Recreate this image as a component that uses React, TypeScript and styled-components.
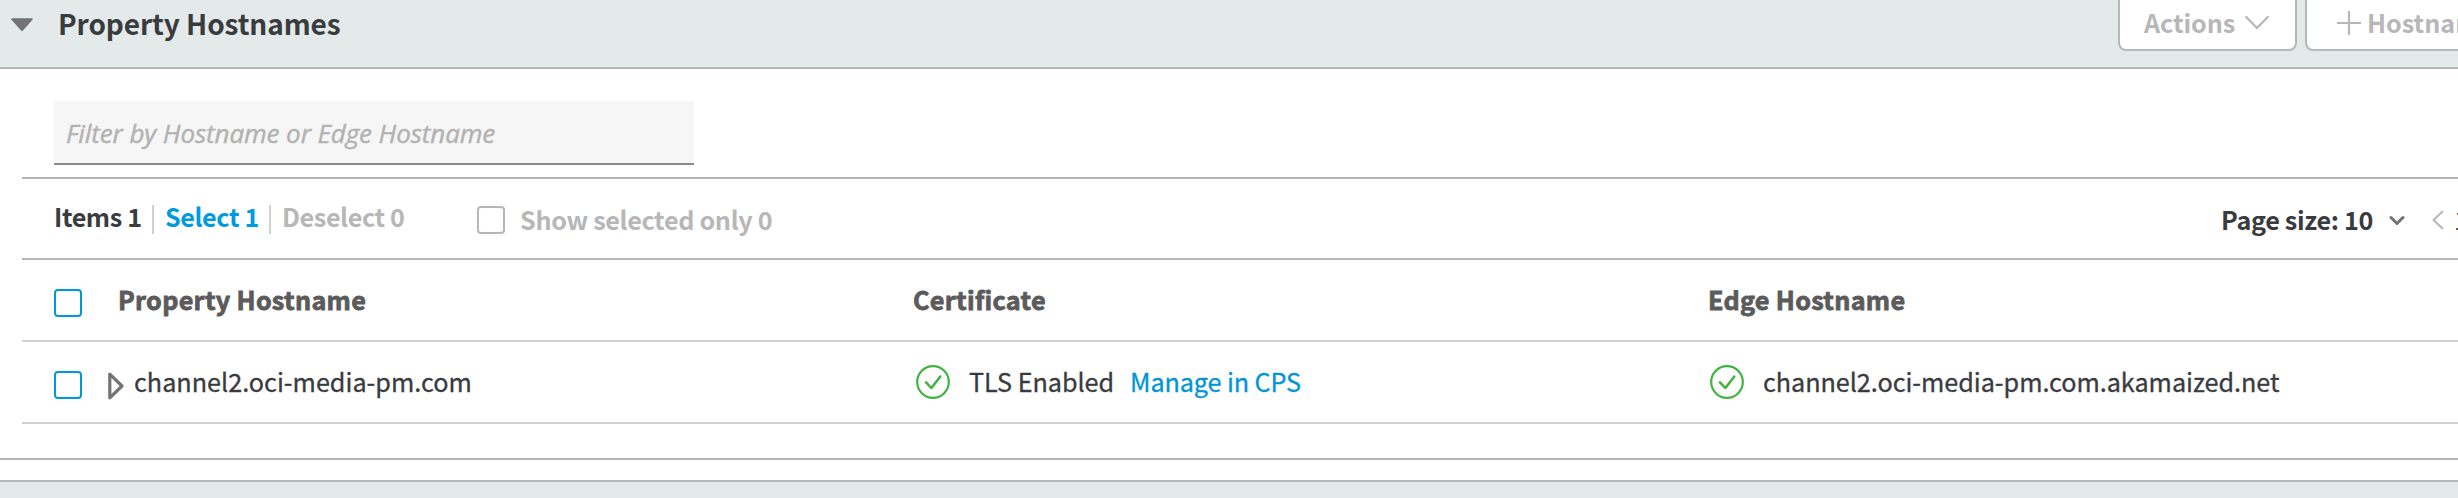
import React from "react";
import styled, { createGlobalStyle } from "styled-components";

const GlobalStyle = createGlobalStyle`
  * { box-sizing: border-box; }
  html, body { margin: 0; background: #fff; overflow: hidden; }
  body {
    font-family: "Noto Sans CJK JP", "Noto Sans", sans-serif;
    font-size: 25.2px;
    color: #3a3b3f;
  }
  svg { display: block; flex: none; }
`;

const Page = styled.div`
  height: 498px;
  display: flex;
  flex-direction: column;
  overflow: hidden;
  white-space: nowrap;
`;

const Header = styled.header`
  flex: none;
  height: 69px;
  display: flex;
  align-items: flex-start;
  background: #e4eae9;
  border-bottom: 2px solid #b3b7b7;
`;

const Collapse = styled.div`
  width: 58px;
  padding: 18px 0 0 10px;
`;

const Title = styled.h2`
  flex: 1;
  margin: 0;
  font-size: 28px;
  line-height: 46px;
  font-weight: 700;
  letter-spacing: -0.08px;
`;

const HeaderActions = styled.div`
  display: flex;
  gap: 8px;
  width: 340px;
`;

const Button = styled.button<{ $width: number; $pad: number }>`
  flex: none;
  width: ${(p) => p.$width}px;
  height: 63px;
  margin: -12px 0 0;
  padding: 9px 0 0 ${(p) => p.$pad}px;
  display: flex;
  align-items: flex-start;
  background: #fff;
  border: 2px solid #b5b8b8;
  border-radius: 8px;
  color: #b7b7b7;
  font: inherit;
  font-weight: 700;
  line-height: 46px;
  text-align: left;
`;

const ActionsLabel = styled.span`
  width: 101px;
  letter-spacing: -0.1px;
`;

const HostLabel = styled.span`
  margin-left: 6px;
`;

const IconSlot = styled.span<{ $top: number }>`
  padding-top: ${(p) => p.$top}px;
`;

const Panel = styled.section`
  flex: none;
  height: 391px;
  padding-left: 22px;
  border-bottom: 2px solid #b7b7b7;
`;

const FilterArea = styled.div`
  height: 110px;
  padding: 32px 0 0 32px;
  border-bottom: 2px solid #b5b5b5;
`;

const FilterInput = styled.input`
  display: block;
  width: 640px;
  height: 64px;
  padding: 2px 12px 0;
  border: 0;
  border-bottom: 2px solid #8a8a8a;
  border-radius: 0;
  background: #f6f6f6;
  font: italic 400 26px "Open Sans", sans-serif;
  letter-spacing: -0.1px;
  outline: none;
  &::placeholder {
    color: #b2b2b2;
    opacity: 1;
    -webkit-text-stroke: 0.4px #b2b2b2;
  }
`;

const Toolbar = styled.div`
  height: 81px;
  display: flex;
  align-items: flex-start;
  padding: 15px 0 0 32px;
  border-bottom: 2px solid #b5b5b5;
  font-weight: 700;
  line-height: 44px;
`;

const Count = styled.span<{ $width: number; $color: string }>`
  width: ${(p) => p.$width}px;
  color: ${(p) => p.$color};
  letter-spacing: -0.4px;
`;

const Divider = styled.i`
  width: 2px;
  height: 29px;
  margin: 11px 11px 0 0;
  background: #d0d0d0;
`;

const Box = styled.span<{ $muted?: boolean }>`
  flex: none;
  width: 28px;
  height: 28px;
  border: 2px solid ${(p) => (p.$muted ? "#b7b7b7" : "#0099d8")};
  border-radius: 4px;
  background: #fff;
`;

const ShowSelected = styled.label`
  flex: 1;
  display: flex;
  gap: 15px;
  padding-top: 3px;
  color: #b7b7b7;
  letter-spacing: -0.34px;
  ${Box} { margin-top: 9px; }
`;

const PageSize = styled.span`
  width: 168px;
  padding-top: 3px;
  letter-spacing: -0.35px;
`;

const Pager = styled.div`
  width: 69px;
  display: flex;
  overflow: hidden;
`;

const PageNumber = styled.span`
  padding: 3px 0 0 9px;
  font-weight: 400;
`;

const Row = styled.div<{ $head?: boolean }>`
  height: 82px;
  display: grid;
  grid-template-columns: 891px 795px 1fr;
  align-items: start;
  border-bottom: 2px solid #d0d0d0;
  line-height: 60px;
  -webkit-text-stroke: 0.3px currentColor;
  ${(p) => p.$head && `
    font-weight: 700;
    color: #5b5b5b;
    letter-spacing: 0.3px;
    -webkit-text-stroke: 0.8px #5b5b5b;
  `}
`;

const Cell = styled.div<{ $top?: number; $left?: number }>`
  display: flex;
  padding: ${(p) => p.$top ?? 0}px 0 0 ${(p) => p.$left ?? 0}px;
`;

const RowCheck = styled.div<{ $width: number }>`
  width: ${(p) => p.$width}px;
  padding: 29px 0 0 32px;
`;

const RowText = styled.span`
  margin-left: 19px;
  letter-spacing: -0.04px;
`;

const Link = styled.a`
  margin-left: 16px;
  color: #0096d6;
  letter-spacing: -0.1px;
`;

const NextSection = styled.div`
  flex: 1;
  margin-top: 20px;
  border-top: 2px solid #b3b7b7;
  background: #e4eae9;
`;

const CheckCircle = () => (
  <IconSlot $top={14}>
    <svg width="34" height="34" viewBox="0 0 34 34" fill="none" stroke="#3fb33f">
      <circle cx="17" cy="17" r="15.8" strokeWidth="2.2" />
      <path d="M10 17.3L15.4 23L24.3 11.5" strokeWidth="2.5" strokeLinecap="round" strokeLinejoin="round" />
    </svg>
  </IconSlot>
);

export default function App() {
  return (
    <Page>
      <GlobalStyle />
      <Header>
        <Collapse>
          <svg width="24" height="14" viewBox="0 0 24 14">
            <path d="M2.2 1.2H21.8L12 12Z" fill="#737373" stroke="#737373" strokeWidth="2" strokeLinejoin="round" />
          </svg>
        </Collapse>
        <Title>Property Hostnames</Title>
        <HeaderActions>
          <Button $width={179} $pad={24}>
            <ActionsLabel>Actions</ActionsLabel>
            <IconSlot $top={16}>
              <svg width="24" height="15" viewBox="0 0 24 15" fill="none" stroke="#b7b7b7" strokeWidth="2.3" strokeLinecap="round" strokeLinejoin="round">
                <path d="M1.2 2L12 13L22.8 2" />
              </svg>
            </IconSlot>
          </Button>
          <Button $width={220} $pad={30}>
            <IconSlot $top={12}>
              <svg width="24" height="24" viewBox="0 0 24 24" stroke="#b7b7b7" strokeWidth="2.2">
                <path d="M12 0V24M0 12H24" />
              </svg>
            </IconSlot>
            <HostLabel>Hostnames</HostLabel>
          </Button>
        </HeaderActions>
      </Header>
      <Panel>
        <FilterArea>
          <FilterInput placeholder="Filter by Hostname or Edge Hostname" />
        </FilterArea>
        <Toolbar>
          <Count $width={98} $color="#3a3b3f">Items 1</Count>
          <Divider />
          <Count $width={104} $color="#009bde">Select 1</Count>
          <Divider />
          <Count $width={195} $color="#b7b7b7">Deselect 0</Count>
          <ShowSelected>
            <Box $muted />
            Show selected only 0
          </ShowSelected>
          <PageSize>Page size: 10</PageSize>
          <Pager>
            <IconSlot $top={21}>
              <svg width="16" height="12" viewBox="0 0 16 12" fill="none" stroke="#737373" strokeWidth="3" strokeLinecap="round" strokeLinejoin="round">
                <path d="M2 2.5L8 8.5L14 2.5" />
              </svg>
            </IconSlot>
            <IconSlot $top={16}>
              <svg width="40" height="20" viewBox="0 0 40 20" fill="none" stroke="#b7b7b7" strokeWidth="2" strokeLinecap="round" strokeLinejoin="round">
                <path d="M37.5 1.5L28.5 10L37.5 18.5" />
              </svg>
            </IconSlot>
            <PageNumber>1</PageNumber>
          </Pager>
        </Toolbar>
        <Row $head>
          <Cell>
            <RowCheck $width={96}><Box as="div" /></RowCheck>
            <Cell $top={9}>Property Hostname</Cell>
          </Cell>
          <Cell $top={9}>Certificate</Cell>
          <Cell $top={9}>Edge Hostname</Cell>
        </Row>
        <Row>
          <Cell>
            <RowCheck $width={86}><Box as="div" /></RowCheck>
            <IconSlot $top={30}>
              <svg width="16" height="28" viewBox="0 0 16 28" fill="none" stroke="#737373" strokeWidth="3.2" strokeLinejoin="round">
                <path d="M1.8 2.2V25.8L14 14Z" />
              </svg>
            </IconSlot>
            <Cell $top={9} $left={10}>channel2.oci-media-pm.com</Cell>
          </Cell>
          <Cell $top={9} $left={3}>
            <CheckCircle />
            <RowText>TLS Enabled</RowText>
            <Link>Manage in CPS</Link>
          </Cell>
          <Cell $top={9} $left={2}>
            <CheckCircle />
            <RowText>channel2.oci-media-pm.com.akamaized.net</RowText>
          </Cell>
        </Row>
      </Panel>
      <NextSection />
    </Page>
  );
}
